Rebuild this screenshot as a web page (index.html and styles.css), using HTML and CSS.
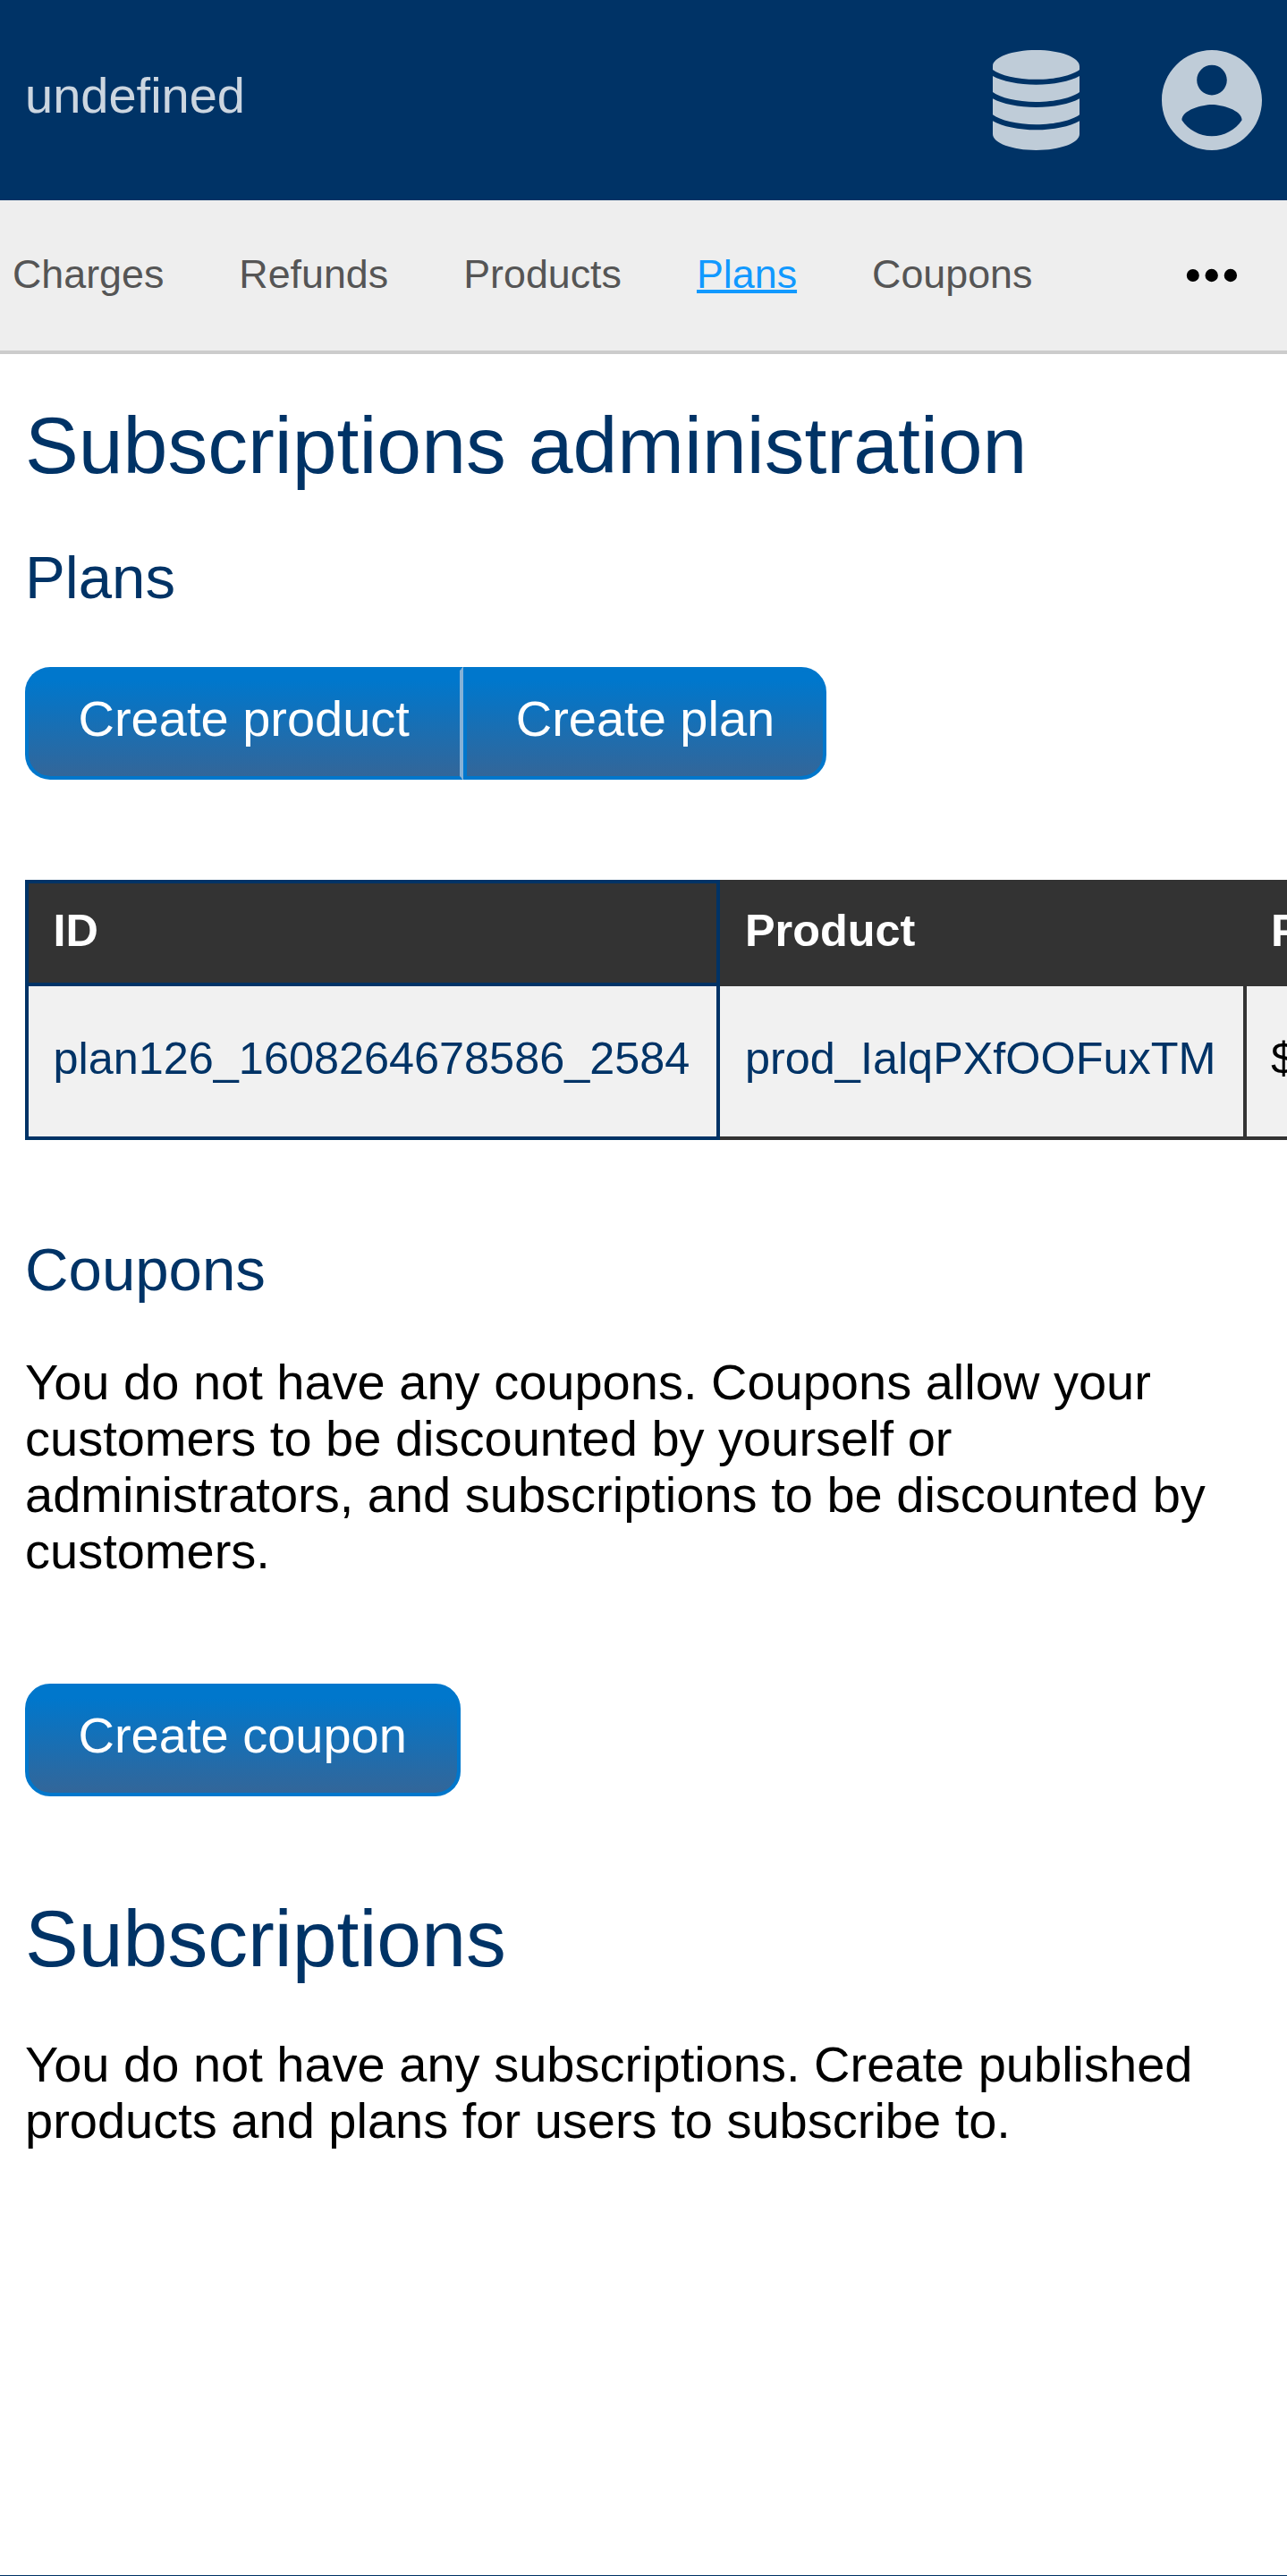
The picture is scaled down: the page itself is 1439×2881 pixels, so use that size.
FILE: index.html
```html
<!DOCTYPE html>
<html lang="en">
<head>
<meta charset="utf-8">
<title>Subscriptions administration</title>
<link rel="stylesheet" href="styles.css">
</head>
<body>
<header class="header">
  <a class="brand">undefined</a>
  <div class="menus">
    <svg class="icon-db" viewBox="0 0 448 512" preserveAspectRatio="none"><path d="M0 100V82C0 37 100 0 224 0s224 37 224 82v18c-38 28-124 50-224 50S38 128 0 100zM0 133c50 28 134 44 224 44s174-16 224-44v82c-38 28-124 50-224 50S38 243 0 215zM0 248c50 28 134 44 224 44s174-16 224-44v82c-38 28-124 50-224 50S38 358 0 330zM0 362c50 28 134 46 224 46s174-18 224-46v68c0 45-100 82-224 82S0 475 0 430z"/></svg>
    <svg class="icon-user" viewBox="2 2 20 20"><path d="M12 2C6.48 2 2 6.48 2 12s4.48 10 10 10 10-4.48 10-10S17.52 2 12 2zm0 3c1.66 0 3 1.34 3 3s-1.34 3-3 3-3-1.34-3-3 1.34-3 3-3zm0 14.2c-2.5 0-4.71-1.28-6-3.22.03-1.99 4-3.08 6-3.08 1.99 0 5.97 1.09 6 3.08-1.29 1.94-3.5 3.22-6 3.22z"/></svg>
  </div>
</header>
<nav class="nav">
  <div class="links">
    <a>Charges</a><a>Refunds</a><a>Products</a><a class="current">Plans</a><a>Coupons</a>
  </div>
  <svg class="more" viewBox="0 0 56 14"><circle cx="6.8" cy="7" r="7"/><circle cx="27.7" cy="7" r="7.2"/><circle cx="48.9" cy="7" r="7.2"/></svg>
</nav>
<main class="content">
  <h1>Subscriptions administration</h1>
  <h2 class="plans-title">Plans</h2>
  <div class="buttons">
    <a class="button first">Create product</a><a class="button last">Create plan</a>
  </div>
  <div class="table-wrap">
    <table>
      <colgroup><col class="col-id"><col class="col-product"><col class="col-price"></colgroup>
      <thead><tr><th class="key">ID</th><th>Product</th><th>Price</th></tr></thead>
      <tbody><tr><td class="key"><a>plan126_1608264678586_2584</a></td><td><a>prod_IalqPXfOOFuxTM</a></td><td>$10.00</td></tr></tbody>
    </table>
  </div>
  <h2 class="coupons-title">Coupons</h2>
  <p class="coupons-text">You do not have any coupons. Coupons allow your customers to be discounted by yourself or administrators, and subscriptions to be discounted by customers.</p>
  <div class="buttons coupon-buttons">
    <a class="button single">Create coupon</a>
  </div>
  <h1 class="subscriptions-title">Subscriptions</h1>
  <p class="subscriptions-text">You do not have any subscriptions. Create published products and plans for users to subscribe to.</p>
</main>
<footer class="footer"></footer>
</body>
</html>
```

FILE: styles.css
```css
* { box-sizing: border-box; }
html, body { margin: 0; height: 2881px; overflow: hidden; }
body {
  display: flex;
  flex-direction: column;
  background: #fff;
  color: #000;
  font: 56px/63px "Liberation Sans", Arial, sans-serif;
}
.header {
  flex: none;
  display: flex;
  align-items: center;
  justify-content: space-between;
  height: 224px;
  padding: 0 28px;
  background: #003366;
}
.brand { color: rgba(255, 255, 255, .8); padding-bottom: 11px; }
.menus { display: flex; gap: 92px; }
.menus svg { height: 112px; fill: #fff; opacity: .75; }
.icon-db { width: 97px; }
.icon-user { width: 112px; }
.nav {
  flex: none;
  display: flex;
  align-items: center;
  justify-content: space-between;
  height: 172px;
  padding: 0 56px 0 14px;
  background: #eee;
  border-bottom: 4px solid #ccc;
}
.links {
  display: flex;
  gap: 84px;
  padding-bottom: 5px;
  color: #555;
  font-size: 44.8px;
  line-height: 52px;
}
.current {
  color: #1199ff;
  text-decoration: underline;
  text-decoration-thickness: 4px;
}
.more { width: 56px; height: 14px; overflow: visible; }
.content { flex: 1; padding: 52px 0 0 28px; overflow: hidden; }
h1, h2 { margin: 0; color: #003366; font-weight: normal; }
h1 { font-size: 89.6px; line-height: 100px; }
h2 { font-size: 67.2px; line-height: 76px; }
p { margin: 0; padding-right: 28px; }
.plans-title { margin-top: 60px; }
.buttons { display: flex; margin-top: 62px; }
.button {
  height: 126px;
  padding: 22px 55px 0 55.5px;
  border: 4px solid #0077cc;
  background: linear-gradient(#0077cc 10%, #336699) padding-box, #0077cc;
  color: #fff;
  line-height: 63px;
  white-space: nowrap;
}
.first { width: 490px; border-radius: 28px 0 0 28px; border-right-color: #86b1d6; }
.last { width: 406px; border-radius: 0 28px 28px 0; padding-left: 54.7px; }
.single { width: 487px; border-radius: 28px; }
.table-wrap { margin-top: 112px; overflow: hidden; }
table {
  width: 1700px;
  table-layout: fixed;
  border-collapse: separate;
  border-spacing: 0;
  font-size: 50.4px;
  line-height: 57px;
}
.col-id { width: 777px; }
.col-product { width: 589px; }
.col-price { width: 334px; }
th, td {
  padding: 0 20px 6px 28px;
  border-right: 4px solid #333;
  border-bottom: 4px solid #333;
  text-align: left;
  white-space: nowrap;
}
th { height: 119px; border-top: 4px solid #333; background: #333; color: #fff; }
td { height: 172px; padding-bottom: 8px; background: #f1f1f1; }
th:last-child, td:last-child { padding-left: 27px; }
td a { color: #003366; }
.key { border-color: #003366; border-left: 4px solid #003366; padding-left: 27.5px; }
.coupons-title { margin-top: 107px; }
.coupons-text { margin-top: 56px; }
.coupon-buttons { margin-top: 117px; }
.subscriptions-title { margin-top: 109px; }
.subscriptions-text { margin-top: 59px; }
.footer { flex: none; height: 1px; background: #003366; }
```
